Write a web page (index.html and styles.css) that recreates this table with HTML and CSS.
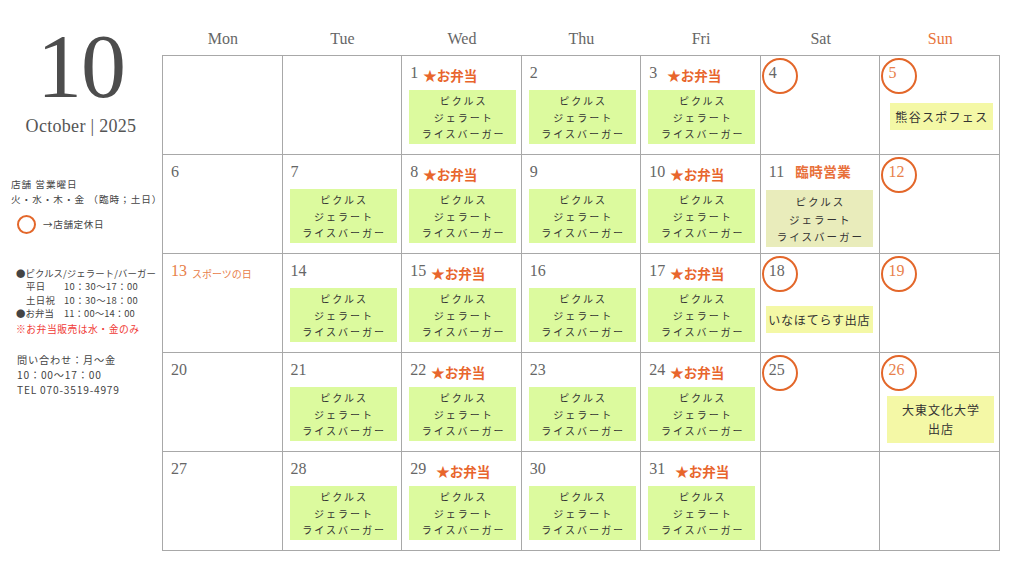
FILE: index.html
```html
<!DOCTYPE html>
<html lang="ja">
<head>
<meta charset="utf-8">
<title>October 2025</title>
<link rel="stylesheet" href="styles.css">
</head>
<body>
<div class="page">
  <aside class="side">
    <div class="month">10</div>
    <div class="sub">October | 2025</div>
    <div class="info">
      <p>店舗 営業曜日</p>
      <p>火・水・木・金 （臨時；土日）</p>
      <p class="legend"><span class="ring"></span>→店舗定休日</p>
    </div>
    <div class="hours">
      <p>●ピクルス/ジェラート/バーガー</p>
      <p class="ind"><span class="lbl">平日</span>10：30〜17：00</p>
      <p class="ind"><span class="lbl">土日祝</span>10：30〜18：00</p>
      <p><span class="lbl2">●お弁当</span>11：00〜14：00</p>
      <p class="red">※お弁当販売は水・金のみ</p>
    </div>
    <div class="contact">
      <p>問い合わせ：月〜金</p>
      <p>10：00〜17：00</p>
      <p>TEL 070-3519-4979</p>
    </div>
  </aside>
  <main class="cal">
    <div class="head">
      <div>Mon</div><div>Tue</div><div>Wed</div><div>Thu</div><div>Fri</div><div>Sat</div><div class="sun">Sun</div>
    </div>
    <div class="grid">
      <!-- row 1 -->
      <div class="cell"></div>
      <div class="cell"></div>
      <div class="cell"><div class="dn"><span class="num">1</span><span class="bento">★お弁当</span></div><div class="menu">ピクルス<br>ジェラート<br>ライスバーガー</div></div>
      <div class="cell"><div class="dn"><span class="num">2</span></div><div class="menu">ピクルス<br>ジェラート<br>ライスバーガー</div></div>
      <div class="cell"><div class="dn"><span class="num">3</span><span class="bento wide">★お弁当</span></div><div class="menu">ピクルス<br>ジェラート<br>ライスバーガー</div></div>
      <div class="cell off"><div class="dn"><span class="num">4</span></div></div>
      <div class="cell off sunc"><div class="dn"><span class="num">5</span></div><div class="event ev-kuma">熊谷スポフェス</div></div>
      <!-- row 2 -->
      <div class="cell"><div class="dn"><span class="num">6</span></div></div>
      <div class="cell"><div class="dn"><span class="num">7</span></div><div class="menu">ピクルス<br>ジェラート<br>ライスバーガー</div></div>
      <div class="cell"><div class="dn"><span class="num">8</span><span class="bento">★お弁当</span></div><div class="menu">ピクルス<br>ジェラート<br>ライスバーガー</div></div>
      <div class="cell"><div class="dn"><span class="num">9</span></div><div class="menu">ピクルス<br>ジェラート<br>ライスバーガー</div></div>
      <div class="cell"><div class="dn"><span class="num">10</span><span class="bento">★お弁当</span></div><div class="menu">ピクルス<br>ジェラート<br>ライスバーガー</div></div>
      <div class="cell"><div class="dn"><span class="num">11</span><span class="rinji">臨時営業</span></div><div class="menu special">ピクルス<br>ジェラート<br>ライスバーガー</div></div>
      <div class="cell off sunc"><div class="dn"><span class="num">12</span></div></div>
      <!-- row 3 -->
      <div class="cell sunc"><div class="dn"><span class="num">13</span><span class="holiday">スポーツの日</span></div></div>
      <div class="cell"><div class="dn"><span class="num">14</span></div><div class="menu">ピクルス<br>ジェラート<br>ライスバーガー</div></div>
      <div class="cell"><div class="dn"><span class="num">15</span><span class="bento">★お弁当</span></div><div class="menu">ピクルス<br>ジェラート<br>ライスバーガー</div></div>
      <div class="cell"><div class="dn"><span class="num">16</span></div><div class="menu">ピクルス<br>ジェラート<br>ライスバーガー</div></div>
      <div class="cell"><div class="dn"><span class="num">17</span><span class="bento">★お弁当</span></div><div class="menu">ピクルス<br>ジェラート<br>ライスバーガー</div></div>
      <div class="cell off"><div class="dn"><span class="num">18</span></div><div class="event ev-ina">いなほてらす出店</div></div>
      <div class="cell off sunc"><div class="dn"><span class="num">19</span></div></div>
      <!-- row 4 -->
      <div class="cell"><div class="dn"><span class="num">20</span></div></div>
      <div class="cell"><div class="dn"><span class="num">21</span></div><div class="menu">ピクルス<br>ジェラート<br>ライスバーガー</div></div>
      <div class="cell"><div class="dn"><span class="num">22</span><span class="bento">★お弁当</span></div><div class="menu">ピクルス<br>ジェラート<br>ライスバーガー</div></div>
      <div class="cell"><div class="dn"><span class="num">23</span></div><div class="menu">ピクルス<br>ジェラート<br>ライスバーガー</div></div>
      <div class="cell"><div class="dn"><span class="num">24</span><span class="bento">★お弁当</span></div><div class="menu">ピクルス<br>ジェラート<br>ライスバーガー</div></div>
      <div class="cell off"><div class="dn"><span class="num">25</span></div></div>
      <div class="cell off sunc"><div class="dn"><span class="num">26</span></div><div class="event ev-dai">大東文化大学<br>出店</div></div>
      <!-- row 5 -->
      <div class="cell"><div class="dn"><span class="num">27</span></div></div>
      <div class="cell"><div class="dn"><span class="num">28</span></div><div class="menu">ピクルス<br>ジェラート<br>ライスバーガー</div></div>
      <div class="cell"><div class="dn"><span class="num">29</span><span class="bento wide">★お弁当</span></div><div class="menu">ピクルス<br>ジェラート<br>ライスバーガー</div></div>
      <div class="cell"><div class="dn"><span class="num">30</span></div><div class="menu">ピクルス<br>ジェラート<br>ライスバーガー</div></div>
      <div class="cell"><div class="dn"><span class="num">31</span><span class="bento wide">★お弁当</span></div><div class="menu">ピクルス<br>ジェラート<br>ライスバーガー</div></div>
      <div class="cell"></div>
      <div class="cell"></div>
    </div>
  </main>
</div>
</body>
</html>
```

FILE: styles.css
```css
* { box-sizing: border-box; }
html, body { margin: 0; padding: 0; background: #fff; }
body {
  width: 1024px;
  height: 576px;
  overflow: hidden;
  font-family: "Noto Sans CJK JP", "Noto Sans", sans-serif;
  color: #333;
}
p { margin: 0; }

.page {
  display: flex;
  width: 1024px;
  height: 576px;
}

/* ---------- sidebar ---------- */
.side {
  width: 162px;
  flex: none;
  display: flex;
  flex-direction: column;
  font-size: 9.6px;
  letter-spacing: 0.4px;
  color: #444;
}
.month {
  margin-top: 22px;
  font-family: "Liberation Serif", "DejaVu Serif", serif;
  font-size: 90px;
  line-height: 1;
  color: #4d4d4d;
  text-align: center;
  letter-spacing: -1px;
}
.sub {
  margin-top: 4px;
  font-family: "Liberation Serif", "DejaVu Serif", serif;
  font-size: 18px;
  line-height: 20px;
  color: #555;
  text-align: center;
  letter-spacing: 0.3px;
}
.info {
  margin-top: 41px;
  padding-left: 11px;
  line-height: 15px;
  letter-spacing: 1px;
}
.legend {
  display: flex;
  align-items: center;
  margin-top: 8px;
  padding-left: 6px;
  letter-spacing: 0.6px;
}
.ring {
  width: 19px;
  height: 19px;
  border: 2px solid #e3672a;
  border-radius: 50%;
  margin-right: 7px;
  flex: none;
}
.hours {
  margin-top: 33px;
  padding-left: 16px;
  line-height: 13.4px;
  font-size: 9.4px;
  letter-spacing: 0.1px;
}
.hours .ind { padding-left: 10px; letter-spacing: 0.4px; }
.lbl { display: inline-block; width: 38px; }
.lbl2 { display: inline-block; width: 48px; }
.red {
  color: #f03a36;
  margin-top: 2px;
  font-size: 9.8px;
  letter-spacing: 0.5px;
}
.contact {
  margin-top: 16px;
  padding-left: 17px;
  line-height: 15px;
  font-size: 10.2px;
  letter-spacing: 0.8px;
}

/* ---------- calendar ---------- */
.cal {
  width: 838px;
  flex: none;
  display: flex;
  flex-direction: column;
}
.head {
  height: 55px;
  display: grid;
  grid-template-columns: repeat(7, 1fr);
  padding-top: 29px;
  padding-left: 1px;
  font-family: "Liberation Serif", "DejaVu Serif", serif;
  font-size: 16px;
  line-height: 20px;
  color: #666;
  text-align: center;
}
.head .sun { color: #e8743b; }

.grid {
  display: grid;
  grid-template-columns: repeat(7, 1fr);
  grid-template-rows: repeat(5, 99px);
  border-top: 1px solid #a8a8a8;
  border-left: 1px solid #a8a8a8;
}
.cell {
  position: relative;
  border-right: 1px solid #a8a8a8;
  border-bottom: 1px solid #a8a8a8;
  padding: 6px 4px 0 7px;
  display: flex;
  flex-direction: column;
}
.dn {
  height: 22px;
  display: flex;
  align-items: baseline;
  white-space: nowrap;
}
.num {
  font-family: "Liberation Serif", "DejaVu Serif", serif;
  font-size: 16px;
  line-height: 22px;
  color: #666;
  padding-left: 1px;
}
.sunc .num { color: #e8804a; }
.off::before {
  content: "";
  position: absolute;
  left: 1px;
  top: 2px;
  width: 32px;
  height: 32px;
  border: 2px solid #e3672a;
  border-radius: 50%;
}
.bento {
  margin-left: 5px;
  font-size: 13.5px;
  font-weight: 700;
  color: #e8652c;
  position: relative;
  top: 3px;
}
.bento.wide { margin-left: 10px; }
.rinji {
  margin-left: 11px;
  font-size: 13.5px;
  font-weight: 700;
  color: #e8703a;
  letter-spacing: 0.5px;
}
.holiday {
  margin-left: 5px;
  font-size: 10px;
  color: #e8804a;
  position: relative;
  top: 2px;
}
.menu {
  margin-top: 6px;
  width: 107px;
  height: 54px;
  padding-top: 3px;
  padding-left: 2px;
  background: #dcfa9e;
  text-align: center;
  font-size: 10px;
  line-height: 16.5px;
  letter-spacing: 2px;
  color: #333;
}
.menu.special {
  margin-left: -2px;
  margin-top: 7px;
  height: 57px;
  padding-top: 3px;
  background: #e9ecbb;
  font-size: 10.5px;
  line-height: 17.5px;
}
.event {
  background: #f4f8a6;
  text-align: center;
  font-size: 12px;
  letter-spacing: 1px;
  color: #333;
}
.ev-kuma {
  margin-top: 19px;
  margin-left: 3px;
  width: 103px;
  height: 27px;
  line-height: 27px;
  letter-spacing: 1.3px;
}
.ev-ina {
  margin-top: 24px;
  margin-left: -2px;
  width: 107px;
  height: 27px;
  line-height: 27px;
  letter-spacing: 0.8px;
}
.ev-dai {
  margin-top: 15px;
  margin-left: 0;
  width: 107px;
  height: 47px;
  padding-top: 4px;
  line-height: 19px;
  letter-spacing: 1px;
}
```
